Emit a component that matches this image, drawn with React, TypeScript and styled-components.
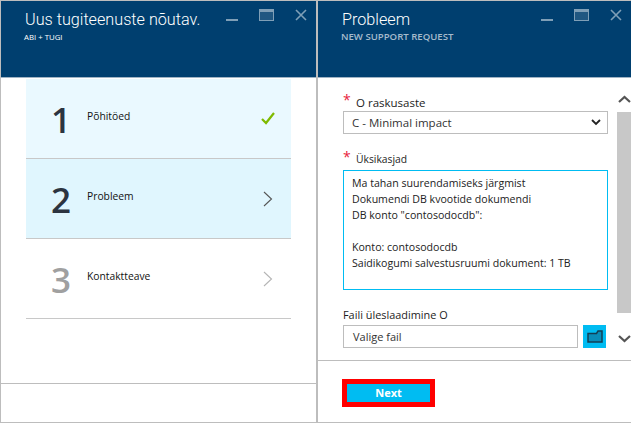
import React from "react";
import styled, { createGlobalStyle } from "styled-components";

const GlobalStyle = createGlobalStyle`
  html, body {
    margin: 0;
    padding: 0;
    background: #fff;
  }
  body {
    font-family: "Open Sans", "Liberation Sans", sans-serif;
    overflow: hidden;
  }
  * {
    box-sizing: border-box;
  }
`;

const Page = styled.div`
  width: 631px;
  height: 423px;
  display: flex;
  border-top: 1px solid #bdbdbd;
  border-bottom: 1px solid #bdbdbd;
  border-left: 1px solid #bdbdbd;
`;

const Blade = styled.section<{ $width: number }>`
  width: ${(p) => p.$width}px;
  flex-shrink: 0;
  display: flex;
  flex-direction: column;
  border-right: 2px solid #bdbdbd;
  &:last-child {
    border-right: none;
  }
`;

const Header = styled.header`
  height: 77px;
  flex-shrink: 0;
  background: #003f6f;
  display: flex;
  justify-content: space-between;
  padding: 8px 9px 0 24px;
  border-bottom: 1px solid #9fb3c4;
`;

const Titles = styled.div`
  display: flex;
  flex-direction: column;
`;

const Title = styled.h1`
  margin: 0;
  font-family: Roboto, "Open Sans", sans-serif;
  font-size: 16.2px;
  line-height: 22px;
  font-weight: 300;
  color: #fff;
  white-space: nowrap;
`;

const Subtitle = styled.div<{ $muted?: boolean }>`
  margin-top: 1px;
  margin-left: -1px;
  font-size: ${(p) => (p.$muted ? 9.6 : 7.8)}px;
  line-height: 10px;
  font-weight: ${(p) => (p.$muted ? 600 : 400)};
  color: ${(p) => (p.$muted ? "#a6bccd" : "#fff")};
  white-space: nowrap;
`;

const WindowControls = styled.div`
  display: flex;
  align-items: flex-start;
  gap: 21px;
  color: #7f9fb7;
`;

const StepsBody = styled.div`
  flex: 1;
  padding: 1px 25px 0;
`;

const Step = styled.div<{ $bg: string }>`
  height: 80px;
  display: flex;
  align-items: center;
  padding: 0 16px 0 25px;
  background: ${(p) => p.$bg};
  border-bottom: 1px solid #c8c8c8;
`;

const StepNumber = styled.span<{ $muted?: boolean }>`
  width: 36px;
  padding-top: 3px;
  font-size: 35px;
  line-height: 40px;
  font-weight: 600;
  color: ${(p) => (p.$muted ? "#a0a0a0" : "#2c3440")};
`;

const StepLabel = styled.span`
  flex: 1;
  margin-top: -5px;
  font-size: 10.3px;
  color: #111;
`;

const EmptyFooter = styled.div`
  height: 39px;
  flex-shrink: 0;
  border-top: 1px solid #bdbdbd;
`;

const ScrollArea = styled.div`
  flex: 1;
  display: flex;
  min-height: 0;
`;

const Form = styled.form`
  flex: 1;
  padding: 15px 9px 0 25px;
  display: flex;
  flex-direction: column;
`;

const Field = styled.div<{ $gap: number }>`
  margin-bottom: ${(p) => p.$gap}px;
`;

const Label = styled.label<{ $size?: number; $lift?: number }>`
  display: flex;
  height: 18px;
  align-items: center;
  padding-bottom: ${(p) => p.$lift ?? 0}px;
  font-size: ${(p) => p.$size ?? 11.5}px;
  color: #1c1c1c;
  white-space: nowrap;
`;

const Required = styled.span`
  width: 13px;
  margin-top: -5px;
  font-size: 14px;
  color: #e8243c;
`;

const Select = styled.div`
  height: 23px;
  display: flex;
  align-items: center;
  justify-content: space-between;
  padding: 0 6px 0 8px;
  border: 1px solid #bdbdbd;
  font-size: 11.5px;
  color: #333;
`;

const TextBox = styled.div`
  height: 120px;
  padding: 4px 8px;
  border: 1px solid #00bcf2;
  font-size: 10.6px;
  line-height: 16px;
  color: #222;
  white-space: pre-line;
`;

const FileRow = styled.div`
  display: flex;
  gap: 5px;
  padding-right: 2px;
`;

const FileInput = styled.div`
  flex: 1;
  height: 23px;
  display: flex;
  align-items: center;
  padding: 0 9px;
  border: 1px solid #bdbdbd;
  font-size: 11px;
  color: #333;
`;

const FolderButton = styled.button`
  width: 23px;
  height: 23px;
  padding: 0;
  border: none;
  background: #00bcf2;
  display: flex;
  align-items: center;
  justify-content: center;
`;

const ScrollTrack = styled.div`
  width: 14px;
  flex-shrink: 0;
  display: flex;
  flex-direction: column;
  align-items: center;
`;

const ScrollEnd = styled.div<{ $height: number; $pad: number }>`
  height: ${(p) => p.$height}px;
  display: flex;
  align-items: flex-end;
  justify-content: center;
  padding: 0 0 ${(p) => p.$pad}px 1px;
  flex-shrink: 0;
`;

const ScrollThumb = styled.div`
  width: 100%;
  height: 201px;
  flex-shrink: 0;
  background: #c8c8c8;
`;

const ActionBar = styled.div`
  height: 62px;
  flex-shrink: 0;
  padding: 18px 0 0 24px;
  border-top: 1px solid #bdbdbd;
`;

const NextButton = styled.button`
  width: 93px;
  height: 28px;
  padding: 0 0 1px;
  border: 5px solid #ff0000;
  background: #00bcf2;
  color: #fff;
  font-family: "Open Sans", "Liberation Sans", sans-serif;
  font-size: 11px;
  font-weight: 700;
`;

const Controls = () => (
  <WindowControls>
    <svg width="12" height="12" viewBox="0 0 12 12">
      <rect y="10" width="12" height="2" fill="currentColor" />
    </svg>
    <svg width="15" height="12" viewBox="0 0 15 12">
      <path d="M0 0h15v12H0z M1 3v8h13V3z" fill="currentColor" fillRule="evenodd" />
      <rect x="1" y="3" width="13" height="8" fill="currentColor" opacity="0.25" />
    </svg>
    <svg width="12" height="12" viewBox="0 0 12 12">
      <path d="M1 1l10 10M11 1L1 11" stroke="currentColor" strokeWidth="1.6" fill="none" />
    </svg>
  </WindowControls>
);

const Chevron = ({ color }: { color: string }) => (
  <svg width="12" height="16" viewBox="0 0 12 16">
    <path d="M1 1l7.5 7L1 15" stroke={color} strokeWidth="1.1" fill="none" />
  </svg>
);

const Check = () => (
  <svg width="14" height="13" viewBox="0 0 14 13">
    <path d="M1 7l4 4 8-10" stroke="#7fba00" strokeWidth="2.2" fill="none" />
  </svg>
);

const ScrollArrow = ({ up }: { up?: boolean }) => (
  <svg width="13" height="8" viewBox="0 0 13 8">
    <path
      d={up ? "M1 7l5.5-5 5.5 5" : "M1 1l5.5 5 5.5-5"}
      stroke="#555"
      strokeWidth="2.2"
      fill="none"
    />
  </svg>
);

const steps = [
  { n: "1", label: "Põhitöed", bg: "#eaf9ff", icon: <Check /> },
  { n: "2", label: "Probleem", bg: "#e0f6fe", icon: <Chevron color="#555" /> },
  { n: "3", label: "Kontaktteave", bg: "#fff", muted: true, icon: <Chevron color="#b5b5b5" /> },
];

const details = `Ma tahan suurendamiseks järgmist
Dokumendi DB kvootide dokumendi
DB konto "contosodocdb":

Konto: contosodocdb
Saidikogumi salvestusruumi dokument: 1 TB`;

const App = () => {
  return (
    <>
      <GlobalStyle />
      <Page>
        <Blade $width={317}>
          <Header>
            <Titles>
              <Title>Uus tugiteenuste nõutav.</Title>
              <Subtitle>ABI + TUGI</Subtitle>
            </Titles>
            <Controls />
          </Header>
          <StepsBody>
            {steps.map((s) => (
              <Step key={s.n} $bg={s.bg}>
                <StepNumber $muted={s.muted}>{s.n}</StepNumber>
                <StepLabel>{s.label}</StepLabel>
                {s.icon}
              </Step>
            ))}
          </StepsBody>
          <EmptyFooter />
        </Blade>
        <Blade $width={313}>
          <Header>
            <Titles>
              <Title>Probleem</Title>
              <Subtitle $muted>NEW SUPPORT REQUEST</Subtitle>
            </Titles>
            <Controls />
          </Header>
          <ScrollArea>
            <Form>
              <Field $gap={18}>
                <Label>
                  <Required>*</Required>O raskusaste
                </Label>
                <Select>
                  C - Minimal impact
                  <svg width="10" height="7" viewBox="0 0 10 7">
                    <path d="M1 1l4 4 4-4" stroke="#222" strokeWidth="1.8" fill="none" />
                  </svg>
                </Select>
              </Field>
              <Field $gap={17}>
                <Label $size={10.3} $lift={4}>
                  <Required>*</Required>Üksikasjad
                </Label>
                <TextBox>{details}</TextBox>
              </Field>
              <Field $gap={0}>
                <Label $size={10.9} $lift={4}>Faili üleslaadimine O</Label>
                <FileRow>
                  <FileInput>Valige fail</FileInput>
                  <FolderButton type="button" aria-label="Sirvi">
                    <svg width="16" height="13" viewBox="0 0 16 13">
                      <path
                        d="M1 12V3.5h8.5L11 1h4v11z"
                        fill="#0a8cb8"
                        stroke="#123f55"
                        strokeWidth="1.5"
                      />
                    </svg>
                  </FolderButton>
                </FileRow>
              </Field>
            </Form>
            <ScrollTrack>
              <ScrollEnd $height={34} $pad={9}>
                <ScrollArrow up />
              </ScrollEnd>
              <ScrollThumb />
              <ScrollEnd $height={30} $pad={0}>
                <ScrollArrow />
              </ScrollEnd>
            </ScrollTrack>
          </ScrollArea>
          <ActionBar>
            <NextButton type="button">Next</NextButton>
          </ActionBar>
        </Blade>
      </Page>
    </>
  );
};

export default App;
